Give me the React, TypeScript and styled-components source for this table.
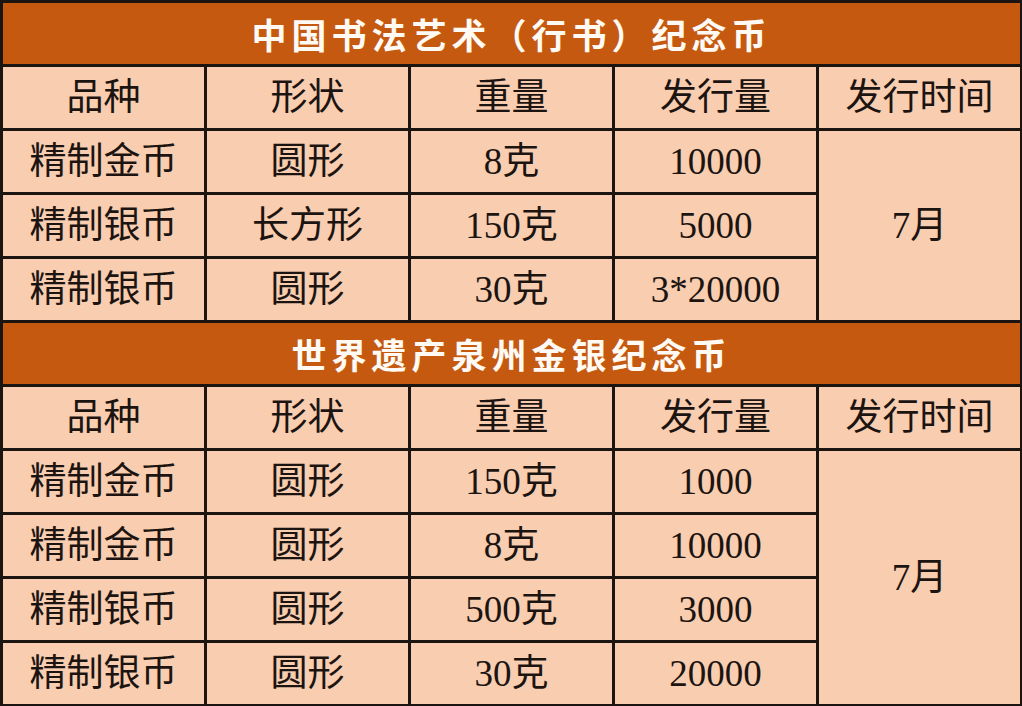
import styled, { createGlobalStyle } from "styled-components";

const GlobalStyle = createGlobalStyle`
  html, body {
    margin: 0;
    padding: 0;
    background: #f8cdb0;
  }
`;

const Table = styled.table`
  width: 1022px;
  border-collapse: collapse;
  table-layout: fixed;
  font-family: "Liberation Serif", "Noto Sans CJK SC", serif;
  color: #1c1410;
`;

const Col = styled.col`
  width: 204px;
`;

const TitleCell = styled.td`
  height: 61px;
  padding: 0;
  background: #c5590f;
  border: 3px solid #1c1410;
  color: #fffaf4;
  font-family: "Noto Sans CJK SC", sans-serif;
  font-weight: 700;
  font-size: 35px;
  letter-spacing: 5px;
  text-align: center;
  vertical-align: middle;
`;

const Cell = styled.td`
  height: 61px;
  padding: 0;
  background: #f8cdb0;
  border: 3px solid #1c1410;
  font-size: 37px;
  font-weight: 400;
  text-align: center;
  vertical-align: middle;
  white-space: nowrap;
  line-height: 1;
`;

type Row = [string, string, string, string];

interface Section {
  title: string;
  rows: Row[];
  month: string;
}

const sections: Section[] = [
  {
    title: "中国书法艺术（行书）纪念币",
    month: "7月",
    rows: [
      ["精制金币", "圆形", "8克", "10000"],
      ["精制银币", "长方形", "150克", "5000"],
      ["精制银币", "圆形", "30克", "3*20000"],
    ],
  },
  {
    title: "世界遗产泉州金银纪念币",
    month: "7月",
    rows: [
      ["精制金币", "圆形", "150克", "1000"],
      ["精制金币", "圆形", "8克", "10000"],
      ["精制银币", "圆形", "500克", "3000"],
      ["精制银币", "圆形", "30克", "20000"],
    ],
  },
];

const heads = ["品种", "形状", "重量", "发行量", "发行时间"];

function CoinSection({ section }: { section: Section }) {
  return (
    <>
      <tr>
        <TitleCell colSpan={5}>{section.title}</TitleCell>
      </tr>
      <tr>
        {heads.map((h) => (
          <Cell key={h}>{h}</Cell>
        ))}
      </tr>
      {section.rows.map((r, i) => (
        <tr key={i}>
          {r.map((v, j) => (
            <Cell key={j}>{v}</Cell>
          ))}
          {i === 0 && <Cell rowSpan={section.rows.length}>{section.month}</Cell>}
        </tr>
      ))}
    </>
  );
}

export default function App() {
  return (
    <>
      <GlobalStyle />
      <Table>
        <colgroup>
          <Col />
          <Col />
          <Col />
          <Col />
          <Col />
        </colgroup>
        <tbody>
          {sections.map((s) => (
            <CoinSection key={s.title} section={s} />
          ))}
        </tbody>
      </Table>
    </>
  );
}
